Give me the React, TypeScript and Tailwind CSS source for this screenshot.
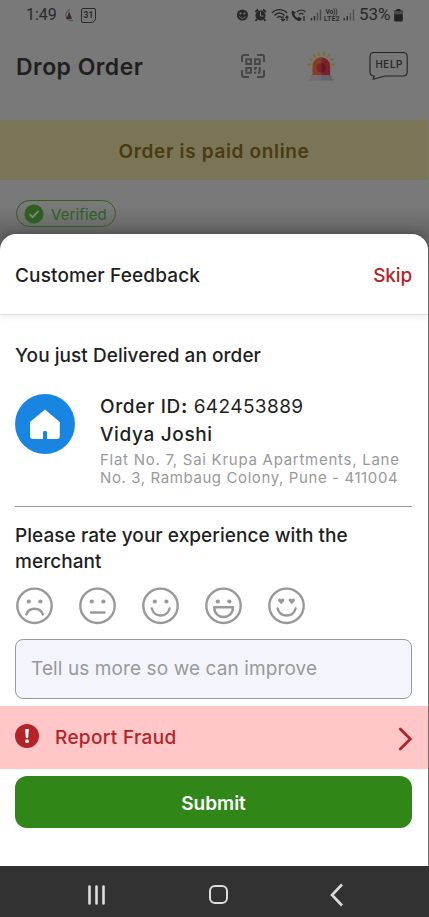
import type { ReactNode } from 'react'

type IFace = {
  name: string
  eyes: ReactNode
  mouth: ReactNode
}

const dotEyes = (
  <g fill="#999" stroke="none">
    <circle cx="12.8" cy="14.2" r="2.1" />
    <circle cx="24.4" cy="14.2" r="2.1" />
  </g>
)

const heartEyes = (
  <g fill="#999" stroke="none">
    <path d="M13.2 17L10.4 14C9 11.8 12 10 13.2 12.2C14.4 10 17.4 11.8 16 14Z" />
    <path d="M23.8 17L21 14C19.6 11.8 22.6 10 23.8 12.2C25 10 28 11.8 26.6 14Z" />
  </g>
)

const faces: IFace[] = [
  { name: 'Terrible', eyes: dotEyes, mouth: <path d="M10.4 27C13 19.6 24.2 19.6 26.8 27" /> },
  { name: 'Okay', eyes: dotEyes, mouth: <path d="M12 25.2H25.4" /> },
  { name: 'Good', eyes: dotEyes, mouth: <path d="M9.8 21.2C12 30.5 25.4 30.5 27.6 21.2" /> },
  {
    name: 'Great',
    eyes: dotEyes,
    mouth: <path d="M9.2 20H28C28 33 9.2 33 9.2 20Z" strokeLinejoin="round" />,
  },
  { name: 'Loved it', eyes: heartEyes, mouth: <path d="M9.6 21.2C12 30.5 25.2 30.5 27.6 21.2" /> },
]

export default function App() {
  return (
    <div className="flex h-[917px] w-[429px] flex-col overflow-hidden bg-[#797979] font-['Inter',sans-serif] text-[#1f1f1f]">
      <StatusBar />
      <Header />
      <div className="flex h-[60px] w-[428px] shrink-0 items-center justify-center bg-[#7a7557] pt-[4px]">
        <p className="text-[19px] font-semibold tracking-[0.65px] text-[#4b3a12]">Order is paid online</p>
      </div>
      <div className="h-[54px] shrink-0 bg-linear-to-b from-[#797979] from-50% to-[#646464] px-4 pt-5">
        <div className="flex h-[27px] w-[100px] items-center rounded-full border border-[#2d5f1f] pl-[7px]">
          <svg width="20" height="20" viewBox="0 0 20 20" className="shrink-0">
            <circle cx="10" cy="10" r="9.6" fill="#2d5f1f" />
            <path d="M5.5 10.2L8.6 13.2L14.7 6.8" fill="none" stroke="#858585" strokeWidth="1.7" />
          </svg>
          <span className="ml-[7px] pt-[3px] text-[15px] tracking-[0.1px] text-[#2d5f1f]">Verified</span>
        </div>
      </div>
      <FeedbackSheet />
      <NavBar />
    </div>
  )
}

function StatusBar() {
  return (
    <div className="flex h-[30px] shrink-0 items-center pl-[26px] font-['Roboto',sans-serif] text-[#292929]">
      <span className="w-[29px] text-[16px]">1:49</span>
      <svg width="12" height="14" viewBox="0 0 12 14" className="ml-[7px]">
        <path d="M8 1.5A5.6 5.6 0 1 0 11 12.5" fill="none" stroke="#4a4a4a" strokeWidth="1" />
        <path d="M7 3L10 11H4L6 7Z" fill="#43252c" />
      </svg>
      <div className="ml-[7px] flex h-[15px] w-[15px] items-center justify-center rounded-[2px] rounded-br-[5px] border-[1.5px] border-[#292929] text-[8.5px] font-bold">
        31
      </div>
      <svg width="104" height="16" viewBox="0 0 104 16" className="ml-[141px]" fill="none" stroke="#292929">
        <circle cx="5.4" cy="8" r="5.6" fill="#292929" stroke="none" />
        <circle cx="3.4" cy="6.4" r="1" fill="#797979" stroke="none" />
        <circle cx="7.4" cy="6.4" r="1" fill="#797979" stroke="none" />
        <path d="M2.4 9.4C4 12 7 12 8.4 9.4" stroke="#797979" />
        <circle cx="23.5" cy="8.5" r="5" fill="#292929" stroke="none" />
        <path d="M18.3 5L21 2.5M26 2.5L28.8 5M20 12L18.5 14M27 12L28.5 14" strokeWidth="1.8" />
        <path d="M23.5 5V9H26.5" stroke="#797979" />
        <path d="M35 6C39 1.5 46 1.5 50 6M37.5 8.4C40.5 5.2 44.5 5.2 47.5 8.4M40 10.8C42 9 43.4 9 45 10.8" strokeWidth="1.4" />
        <path d="M46 9V14M44 12L46 14L48 12M50 14V9M48.5 11L50 9L51.5 11" strokeWidth="1.1" />
        <path d="M55.5 3.5C52.5 6 57.5 14 63 14L65 11.8L61.8 9.8L60.2 11C58.5 9.8 57.5 8.2 57.3 6.8L58.8 5.5Z" fill="#292929" stroke="none" />
        <path d="M60 5C62.5 2.5 66 2.5 68.5 5M62 7.4C63.5 6 65 6 66.5 7.4M67 9V14" strokeWidth="1.3" />
        <path d="M74.5 13.5V11M77.5 13.5V9" strokeWidth="1.4" />
        <path d="M80.5 13.5V6M83.5 13.5V2.5" stroke="#484848" strokeWidth="1.4" />
        <text x="88.5" y="6.8" fill="#292929" stroke="none" fontSize="6.5" fontWeight="700" textLength="12">Vo))</text>
        <text x="87" y="14.4" fill="#292929" stroke="none" fontSize="6.5" fontWeight="700" textLength="15.5">LTE2</text>
      </svg>
      <svg width="12" height="14" viewBox="0 0 12 14" className="ml-[2px]" fill="none" strokeWidth="1.4">
        <path d="M1.2 12.5V10M4.3 12.5V8" stroke="#2f2f2f" />
        <path d="M7.4 12.5V5M10.5 12.5V1.5" stroke="#505050" />
      </svg>
      <span className="ml-[4px] w-[33px] text-[17px] tracking-[-0.1px]">53%</span>
      <svg width="9" height="13" viewBox="0 0 9 13" className="ml-[2px]">
        <path d="M2.7 0H6.3V1.3H7.5A1.3 1.3 0 0 1 8.8 2.6V11A1.4 1.4 0 0 1 7.4 12.5H1.6A1.4 1.4 0 0 1 .2 11V2.6A1.3 1.3 0 0 1 1.5 1.3H2.7Z" fill="#222" />
        <rect x=".2" y="2" width="8.6" height="3.4" fill="#4c4c4c" />
      </svg>
    </div>
  )
}

function Header() {
  return (
    <div className="flex h-[90px] shrink-0 items-start pl-4">
      <h1 className="w-[225px] pt-[20px] text-[23px] leading-[34px] font-semibold tracking-[0.45px]">Drop Order</h1>
      <svg width="24" height="24" viewBox="0 0 24 24" className="mt-6" fill="none" stroke="#464646" strokeWidth="2">
        <path d="M1 8V3Q1 1 3 1H8M16 1H21Q23 1 23 3V8M23 16V21Q23 23 21 23H16M8 23H3Q1 23 1 21V16" />
        <rect x="5.3" y="5.3" width="4.7" height="4.7" />
        <rect x="14" y="5.3" width="4.7" height="4.7" />
        <rect x="5.3" y="14" width="4.7" height="4.7" />
        <path d="M14 16V14H16M18.7 13V18.7H17M13 18.7H15.2" />
      </svg>
      <svg width="28" height="31" viewBox="0 0 28 31" className="mt-[21px] ml-[42px]">
        <path d="M.5 13.5H4.5M2 7.5L5.5 9.5M6.2 3L8.5 6.7M11.6.6L12.3 4.8M17.2.6L16.6 4.8M22.6 3L20.2 6.7M26.8 7.5L23.4 9.5M28 13.5H24" stroke="#806d1d" strokeWidth="1.5" />
        <path d="M5.5 24V15A8.8 8.8 0 0 1 14.3 6.2V24Z" fill="#863e20" />
        <path d="M14.3 6.2A8.8 8.8 0 0 1 23.1 15V24H14.3Z" fill="#7c2226" />
        <path d="M14.3 12.2A4.7 4.7 0 0 0 14.3 21.6Z" fill="#7a2428" />
        <path d="M14.3 12.2A4.7 4.7 0 0 1 14.3 21.6Z" fill="#65162c" />
        <path d="M4 24H14.3V29.5H2V28H4Z" fill="#706d78" />
        <path d="M14.3 24H24.5V28H26.5V29.5H14.3Z" fill="#67616f" />
      </svg>
      <svg width="40" height="30" viewBox="0 0 40 30" className="mt-[21px] ml-[34px]">
        <path d="M5 1.5H34Q38.2 1.5 38.2 5.5V21Q38.2 25 34 25H16L4.2 28.3L5.2 25Q1 25 1 21V5.5Q1 1.5 5 1.5Z" fill="none" stroke="#242424" strokeWidth="1.1" />
        <text x="6.4" y="17" fontSize="9.8" fontWeight="600" fill="#292929" textLength="27">HELP</text>
      </svg>
    </div>
  )
}

function FeedbackSheet() {
  return (
    <div className="h-[632px] shrink-0 bg-linear-to-b from-[#646464] to-[#797979] to-10%">
      <div className="flex h-full w-[428px] flex-col rounded-t-2xl bg-white shadow-[0_-2px_10px_rgba(0,0,0,0.2)]">
        <div className="flex h-[81px] shrink-0 items-center justify-between rounded-t-2xl border-b border-[#dfdfdf] pr-4 pl-[15px] pt-[4px] shadow-[0_3px_6px_rgba(0,0,0,0.06)]">
          <h2 className="text-[19px] font-medium tracking-[0.14px]">Customer Feedback</h2>
          <button className="text-[19px] font-medium tracking-[-0.15px] text-[#b32428]">Skip</button>
        </div>
        <div className="flex flex-col px-4 pl-[15px]">
          <p className="mt-[28px] text-[19px] leading-[26px] font-medium tracking-[0.05px]">You just Delivered an order</p>
          <OrderDetails />
          <p className="mt-[16px] text-[19px] leading-[26px] font-medium tracking-[0.05px]">
            Please rate your experience with the
            <br />
            merchant
          </p>
          <div className="mt-[12px] flex gap-[26px]">
            {faces.map((val) => (
              <Face key={val.name} {...val} />
            ))}
          </div>
          <input
            className="mt-[14px] h-[60px] rounded-lg border border-[#999] bg-[#f4f5fc] px-[15px] pb-[2px] text-[19px] tracking-[0.1px] placeholder:text-[#999] placeholder:opacity-100"
            placeholder="Tell us more so we can improve"
          />
        </div>
        <button className="mt-[7px] flex h-[63px] shrink-0 items-center bg-[#ffc7c7] pr-4 pl-[15px] text-[#b32428]">
          <svg width="24" height="24" viewBox="0 0 24 24" className="mb-[3px]">
            <circle cx="12" cy="12" r="12" fill="#b32428" />
            <path d="M10.2 5H13.8L13.2 14H10.8Z" fill="#fff" />
            <circle cx="12" cy="17.2" r="1.9" fill="#fff" />
          </svg>
          <span className="ml-4 pt-[2px] text-[19px] font-medium tracking-[0.33px]">Report Fraud</span>
          <svg width="14" height="24" viewBox="0 0 14 24" className="mt-[2px] ml-auto" fill="none" stroke="#b32428" strokeWidth="2.8" strokeLinecap="round">
            <path d="M2.3 2L12.3 12L2.3 22" />
          </svg>
        </button>
        <button className="mt-[7px] mr-4 ml-[15px] h-[52px] rounded-xl bg-[#318618] pt-[4px] text-[19px] font-semibold text-white">
          Submit
        </button>
      </div>
    </div>
  )
}

function OrderDetails() {
  return (
    <div className="mt-[25px] flex h-[113px] border-b border-[#999]">
      <svg width="60" height="60" viewBox="0 0 60 60" className="shrink-0">
        <circle cx="30" cy="30" r="30" fill="#1985e3" />
        <path d="M30 15.5L44.8 28V42Q44.8 45 42 45H32V38.5Q32 36.7 30 36.7T28 38.5V45H18Q15 45 15 42V28Z" fill="#fff" />
      </svg>
      <div className="ml-[25px] whitespace-nowrap">
        <p className="-mt-px text-[19px] leading-[28px] font-medium tracking-[0.65px]">
          Order ID<b>:</b> <span className="font-normal tracking-[0.4px]">642453889</span>
        </p>
        <p className="text-[19px] leading-[28px] font-medium tracking-[0.65px]">Vidya Joshi</p>
        <p className="mt-[2px] text-[15px] leading-[18px] tracking-[0.73px] text-[#999]">
          Flat No. 7, Sai Krupa Apartments, Lane
          <br />
          <span className="tracking-[0.6px]">No. 3, Rambaug Colony, Pune - 411004</span>
        </p>
      </div>
    </div>
  )
}

function Face(props: IFace) {
  return (
    <button aria-label={props.name}>
      <svg width="37" height="38" viewBox="0 -0.3 37 38" fill="none" stroke="#999" strokeWidth="2.4" strokeLinecap="round" className="ml-px -mr-px block">
        <circle cx="18.5" cy="18.5" r="17.2" />
        {props.eyes}
        {props.mouth}
      </svg>
    </button>
  )
}

function NavBar() {
  return (
    <div className="flex h-[51px] shrink-0 items-center bg-[#323232] pt-[6px] pl-[87px]">
      <svg width="19" height="20" viewBox="0 0 19 20" stroke="#ddd" strokeWidth="2.6" strokeLinecap="round">
        <path d="M2.5 1.5V18.5M9.5 1.5V18.5M16.5 1.5V18.5" />
      </svg>
      <div className="ml-[103px] h-[19px] w-[19px] rounded-md border-2 border-[#ddd]" />
      <svg width="14" height="24" viewBox="0 0 14 24" className="ml-[102px]" fill="none" stroke="#ddd" strokeWidth="2.6">
        <path d="M12 1.5L2 12L12 22.5" />
      </svg>
    </div>
  )
}
